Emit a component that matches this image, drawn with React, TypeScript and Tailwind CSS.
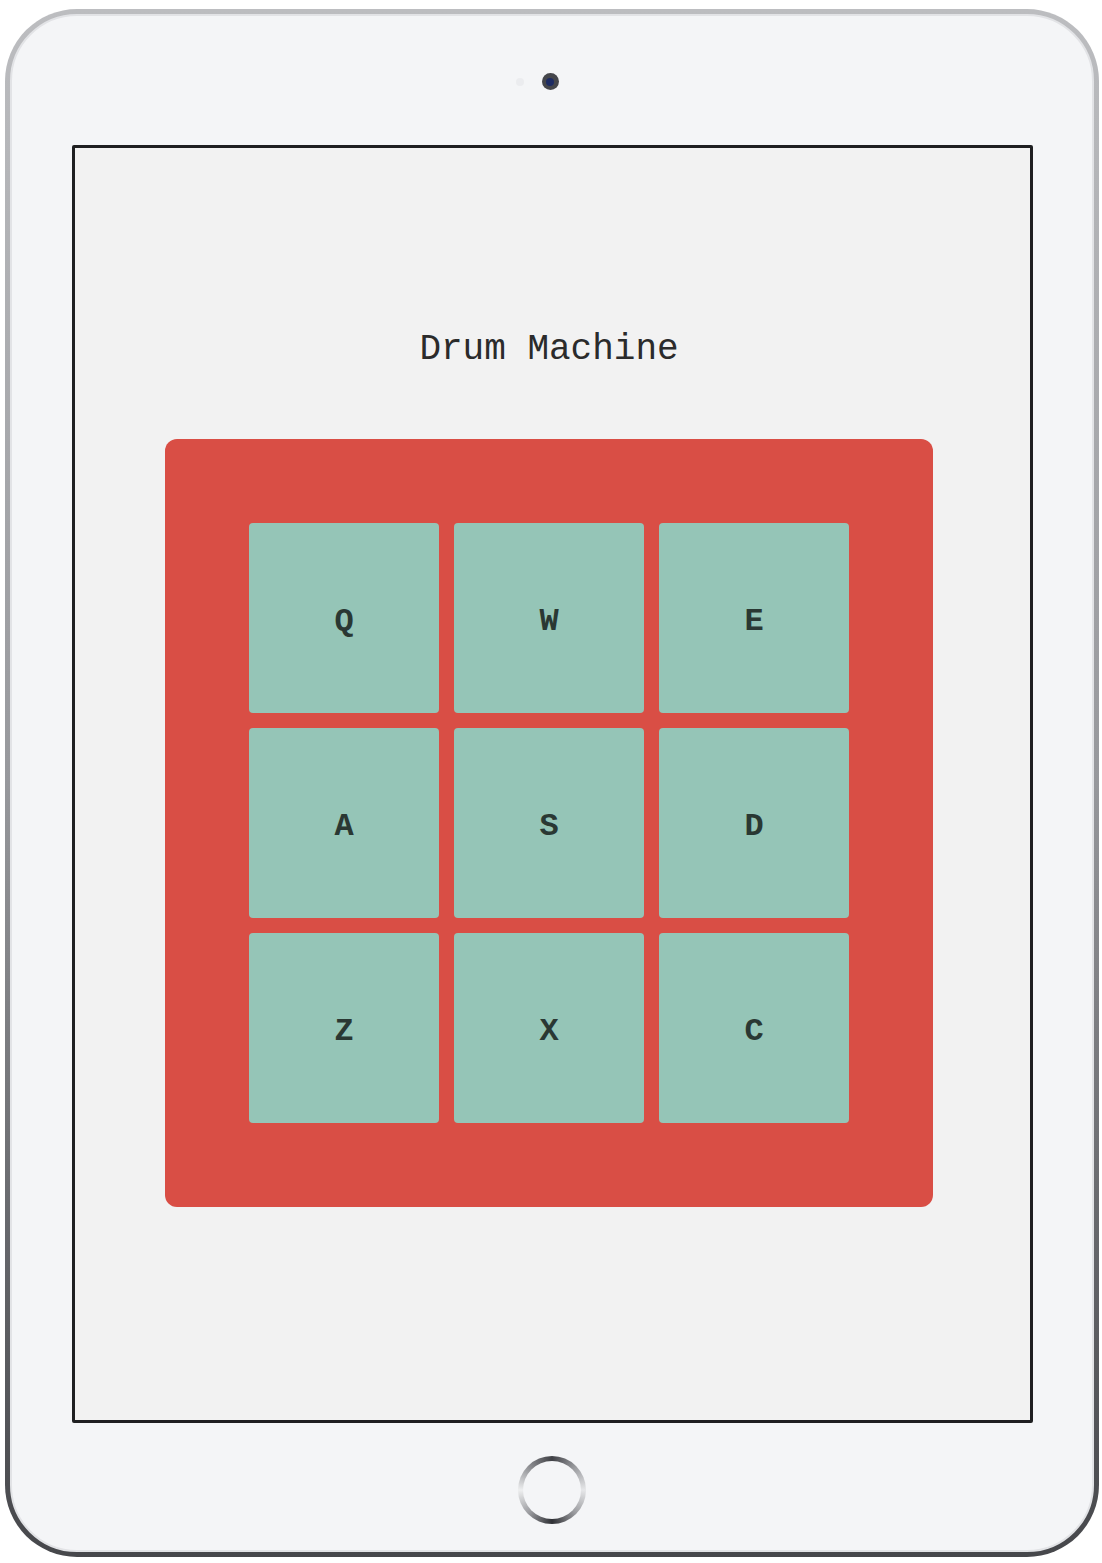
const pads = ['Q', 'W', 'E', 'A', 'S', 'D', 'Z', 'X', 'C']

function Pad({ letter }: { letter: string }) {
  return (
    <div className="flex h-[190px] w-[190px] items-center justify-center rounded-[4px] bg-[#95c5b7] pt-[7px] text-[32px] font-bold text-[#2a3833]">
      {letter}
    </div>
  )
}

export default function App() {
  return (
    <div
      className="h-[1563px] w-[1102px] bg-white pl-[5px] pt-[9px]"
      style={{ fontFamily: '"Liberation Mono", "Courier New", monospace' }}
    >
      {/* device bezel */}
      <div className="h-[1548px] w-[1094px] rounded-[72px] bg-linear-to-b from-[#bcbdc0] via-[#97989c] to-[#46474b] p-[5px]">
        <div className="flex h-full w-full flex-col items-center rounded-[67px] border-2 border-[#e2e3e6] bg-[#f4f5f7] pt-[57px] pb-[26px]">
          <div className="flex items-center gap-[18px] pr-[30px]">
            <div className="h-[8px] w-[8px] rounded-full bg-[#ebecef]" />
            <div className="flex h-[17px] w-[17px] items-center justify-center rounded-full bg-[#45464b]">
              <div className="h-[8px] w-[8px] rounded-full bg-[#1d2b63]" />
            </div>
          </div>

          {/* screen */}
          <div className="mt-[55px] flex h-[1278px] w-[961px] flex-col items-center rounded-[2px] border-[3px] border-[#1f1f21] bg-[#f2f2f2] pt-[182px] pr-[6px]">
            <h1 className="text-[36px] leading-[40px] text-[#2b2b2b]">Drum Machine</h1>
            <div className="mt-[69px] rounded-[12px] bg-[#d94e45] p-[84px]">
              <div className="grid grid-cols-3 gap-[15px]">
                {pads.map(p => (
                  <Pad key={p} letter={p} />
                ))}
              </div>
            </div>
          </div>

          {/* home button */}
          <div className="mt-[33px] h-[68px] w-[68px] rounded-full bg-[conic-gradient(#3f4045,#9a9b9f,#e6e7e9,#9a9b9f,#2f3035,#9a9b9f,#eeeff0,#8e8f93,#3f4045)] p-[5px]">
            <div className="h-full w-full rounded-full bg-[#f4f5f7]" />
          </div>
        </div>
      </div>
    </div>
  )
}
